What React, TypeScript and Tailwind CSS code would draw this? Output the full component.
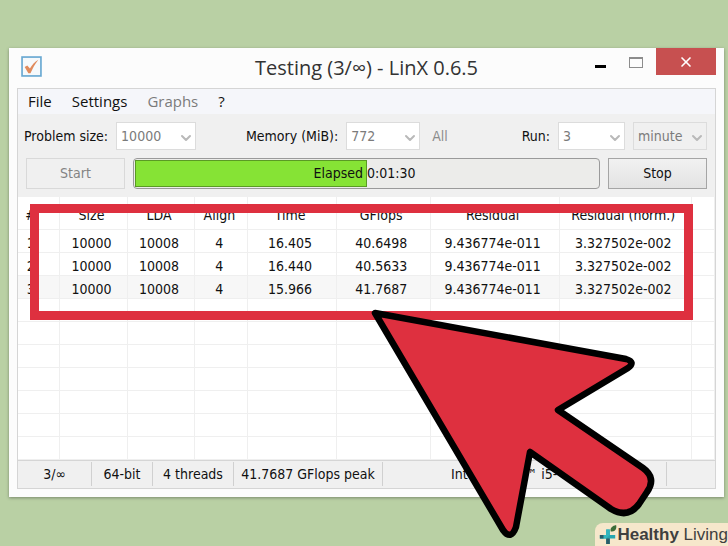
import { ChevronDown, X } from 'lucide-react'

interface Result {
  size: string
  lda: string
  align: string
  time: string
  gflops: string
  residual: string
  norm: string
}

const results: Result[] = [
  { size: '10000', lda: '10008', align: '4', time: '16.405', gflops: '40.6498', residual: '9.436774e-011', norm: '3.327502e-002' },
  { size: '10000', lda: '10008', align: '4', time: '16.440', gflops: '40.5633', residual: '9.436774e-011', norm: '3.327502e-002' },
  { size: '10000', lda: '10008', align: '4', time: '15.966', gflops: '41.7687', residual: '9.436774e-011', norm: '3.327502e-002' },
]

const emptyRows = [0, 1, 2, 3, 4, 5, 6]

interface ComboProps {
  id: string
  label: string
  hideLabel?: boolean
  value: string
  className: string
}

function Combo({ id, label, hideLabel, value, className }: ComboProps) {
  return (
    <div className="flex items-center gap-2">
      {!hideLabel && <label htmlFor={id} className="whitespace-nowrap">{label}</label>}
      <div className="relative">
        <select
          id={id}
          aria-label={hideLabel ? label : undefined}
          disabled
          className={`h-7 appearance-none border border-[#dcdcdc] pl-1 text-[#7b7b7b] opacity-100 ${className}`}
        >
          <option>{value}</option>
        </select>
        <ChevronDown className="pointer-events-none absolute right-0.5 top-2 h-4 w-4 text-[#b9b9b9]" strokeWidth={3} />
      </div>
    </div>
  )
}

function TitleBar() {
  return (
    <header className="flex h-10 items-start">
      <div className="flex flex-1 items-start">
        <svg viewBox="0 0 20 20" className="ml-1 mt-2 h-[21px] w-[21px]" aria-hidden="true">
          <rect x="1" y="1" width="18" height="18" fill="#f6f9fb" stroke="#6aa9d2" strokeWidth="1.6" />
          <path d="M3.5 10.5 L6 9 L8.5 12 C10.5 8.5 13 5.5 16.5 3.5 C13 8 11 12 9 16.5 L7 16.5 Z" fill="#e08a5c" />
        </svg>
      </div>
      <h1 className="pt-1.5 font-['Open_Sans','Noto_Sans',sans-serif] text-[20px] leading-7 whitespace-nowrap text-[#333]">
        Testing (3/∞) - LinX 0.6.5
      </h1>
      <div className="flex flex-1 items-start justify-end">
        <button aria-label="Minimize" className="flex h-7 w-8 items-center justify-center">
          <span className="mt-2 h-[3px] w-[11px] bg-black" />
        </button>
        <button aria-label="Maximize" className="flex h-7 w-10 items-center justify-center">
          <span className="h-[11px] w-[14px] border border-t-2 border-[#8c8c8c]" />
        </button>
        <button aria-label="Close" className="flex h-[27px] w-[60px] items-center justify-center bg-[#c75050] text-white">
          <X className="h-4 w-4" strokeWidth={2.5} />
        </button>
      </div>
    </header>
  )
}

function ResultsTable() {
  const cell = 'border-r border-b border-[#efefef] pt-1 pb-0 pl-0 pr-1 text-center leading-[18px] font-normal whitespace-nowrap'
  const numberCell = 'border-r border-b border-[#efefef] pt-1 pb-0 pl-0 pr-4 text-center leading-[18px] font-normal'
  return (
    <table className="w-full table-fixed border-collapse bg-white">
      <colgroup>
        <col className="w-[6%]" />
        <col className="w-[9.7%]" />
        <col className="w-[9.7%]" />
        <col className="w-[7.6%]" />
        <col className="w-[12.7%]" />
        <col className="w-[13.5%]" />
        <col className="w-[18.5%]" />
        <col className="w-[19%]" />
        <col />
      </colgroup>
      <thead>
        <tr className="h-8">
          {['#', 'Size', 'LDA', 'Align', 'Time', 'GFlops', 'Residual', 'Residual (norm.)', ''].map((h, i) => (
            <th key={i} className={i === 0 ? numberCell : cell}>{h}</th>
          ))}
        </tr>
      </thead>
      <tbody>
        {results.map((r, i) => (
          <tr key={i} className={i === 2 ? 'h-[23px] bg-[#f7f7f7]' : 'h-[23px]'}>
            <td className={numberCell}>{i + 1}</td>
            <td className={cell}>{r.size}</td>
            <td className={cell}>{r.lda}</td>
            <td className={cell}>{r.align}</td>
            <td className={cell}>{r.time}</td>
            <td className={cell}>{r.gflops}</td>
            <td className={cell}>{r.residual}</td>
            <td className={cell}>{r.norm}</td>
            <td className={`${cell} bg-white`} />
          </tr>
        ))}
        {emptyRows.map((n) => (
          <tr key={n} className="h-[23px]">
            {[0, 1, 2, 3, 4, 5, 6, 7, 8].map((c) => <td key={c} className={cell} />)}
          </tr>
        ))}
      </tbody>
    </table>
  )
}

function Pointer() {
  return (
    <svg viewBox="0 0 300 240" className="absolute left-[365px] top-[305px] h-[240px] w-[300px]" aria-hidden="true">
      <path
        d="M10 8 L261 54 Q271 57 263 63 L193 105 L278 163 Q292 173 282 187 L274 199 Q263 214 246 204 L165 147 L151 222 Q146 236 138 225 Z"
        fill="#de303f"
        stroke="#000"
        strokeWidth="6.5"
        strokeLinejoin="round"
      />
    </svg>
  )
}

function Watermark() {
  return (
    <div className="absolute bottom-0 right-0 flex h-[23px] items-center rounded-tl-lg bg-[#f6e7cb] pl-1 font-['Liberation_Sans',Arial,sans-serif] text-[17px] text-[#3f3f3f]">
      <svg viewBox="0 0 20 22" className="h-5 w-[18px]" aria-hidden="true">
        <path d="M8 5 H12 V11 H18 V15 H12 V21 H8 V15 H1 V11 H8 Z" fill="#27a5b0" />
        <path d="M8 5 H12 V11 L8 15 H1 V11 H8 Z" fill="#32b5bd" />
        <path d="M8 15 H12 V21 H8 Z M1 11 H5 V15 H1 Z" fill="#2b5c68" />
        <path d="M13 7 C12 3 15 1 19 0 C20 4 18 8 13 7 Z" fill="#3c6e3a" />
      </svg>
      <span className="whitespace-nowrap"><b>Healthy</b> Living</span>
    </div>
  )
}

export default function App() {
  return (
    <div className="relative min-h-screen overflow-hidden bg-[#b9d0a4] pt-12 pl-[9px] pr-1 font-['DejaVu_Sans_Condensed','Noto_Sans',sans-serif] text-[14px] text-[#111]">
      <main className="bg-[#fcfcfc] px-2 pb-2 shadow-[0_1px_3px_rgba(0,0,0,0.35)]">
        <TitleBar />
        <div className="border border-[#d5d5d5] bg-[#f0f0f0]">
          <nav className="flex h-[25px] items-center gap-5 bg-[#f5f6fa] pl-2.5 font-['Open_Sans','Noto_Sans',sans-serif] text-[15px]">
            <button>File</button>
            <button>Settings</button>
            <button disabled className="text-[#7b7b7b]">Graphs</button>
            <button>?</button>
          </nav>

          <div className="flex items-center justify-between pt-2 pl-1.5 pr-2">
            <Combo id="size" label="Problem size:" value="10000" className="w-20 bg-white" />
            <div className="flex items-center gap-3 pr-6">
              <Combo id="memory" label="Memory (MiB):" value="772" className="w-[74px] bg-white" />
              <button disabled className="text-[#8c8c8c]">All</button>
            </div>
            <div className="flex items-center gap-2">
              <Combo id="run" label="Run:" value="3" className="w-[67px] bg-white" />
              <Combo id="unit" label="Unit" hideLabel value="minute" className="w-[74px] bg-[#f0f0f0]" />
            </div>
          </div>

          <div className="flex items-center gap-2 pt-2 pb-2 pl-2 pr-2">
            <button disabled className="h-[31px] w-[99px] border border-[#d9d9d9] text-[#838383]">Start</button>
            <div className="relative h-[31px] flex-1 rounded border border-[#9a9a9a] bg-[#ececea] p-px">
              <div className="h-full w-1/2 border border-[#5a9a24] bg-[#86e335]" />
              <span className="absolute inset-0 flex items-center justify-center pr-1">Elapsed 0:01:30</span>
            </div>
            <button className="h-[31px] w-[99px] border border-[#a5a5a5] bg-gradient-to-b from-[#f1f1f1] to-[#e3e3e3]">Stop</button>
          </div>

          <ResultsTable />

          <footer className="flex h-7 items-center border-t border-[#d5d5d5] text-center leading-6 whitespace-nowrap">
            <span className="w-[74px] border-r border-[#d0d0d0]">3/∞</span>
            <span className="w-[61px] border-r border-[#d0d0d0]">64-bit</span>
            <span className="w-[81px] border-r border-[#d0d0d0]">4 threads</span>
            <span className="w-[149px] border-r border-[#d0d0d0]">41.7687 GFlops peak</span>
            <span className="flex-1 border-r border-[#d0d0d0] pl-[68px] text-left">Intel® Core™ i5-</span>
            <span className="w-12" />
          </footer>
        </div>
      </main>

      {/* highlight around the results */}
      <div className="pointer-events-none absolute left-[30px] right-[35px] top-[204px] h-[116px] border-[9px] border-[#de303f]" />
      <Pointer />
      <Watermark />
    </div>
  )
}
